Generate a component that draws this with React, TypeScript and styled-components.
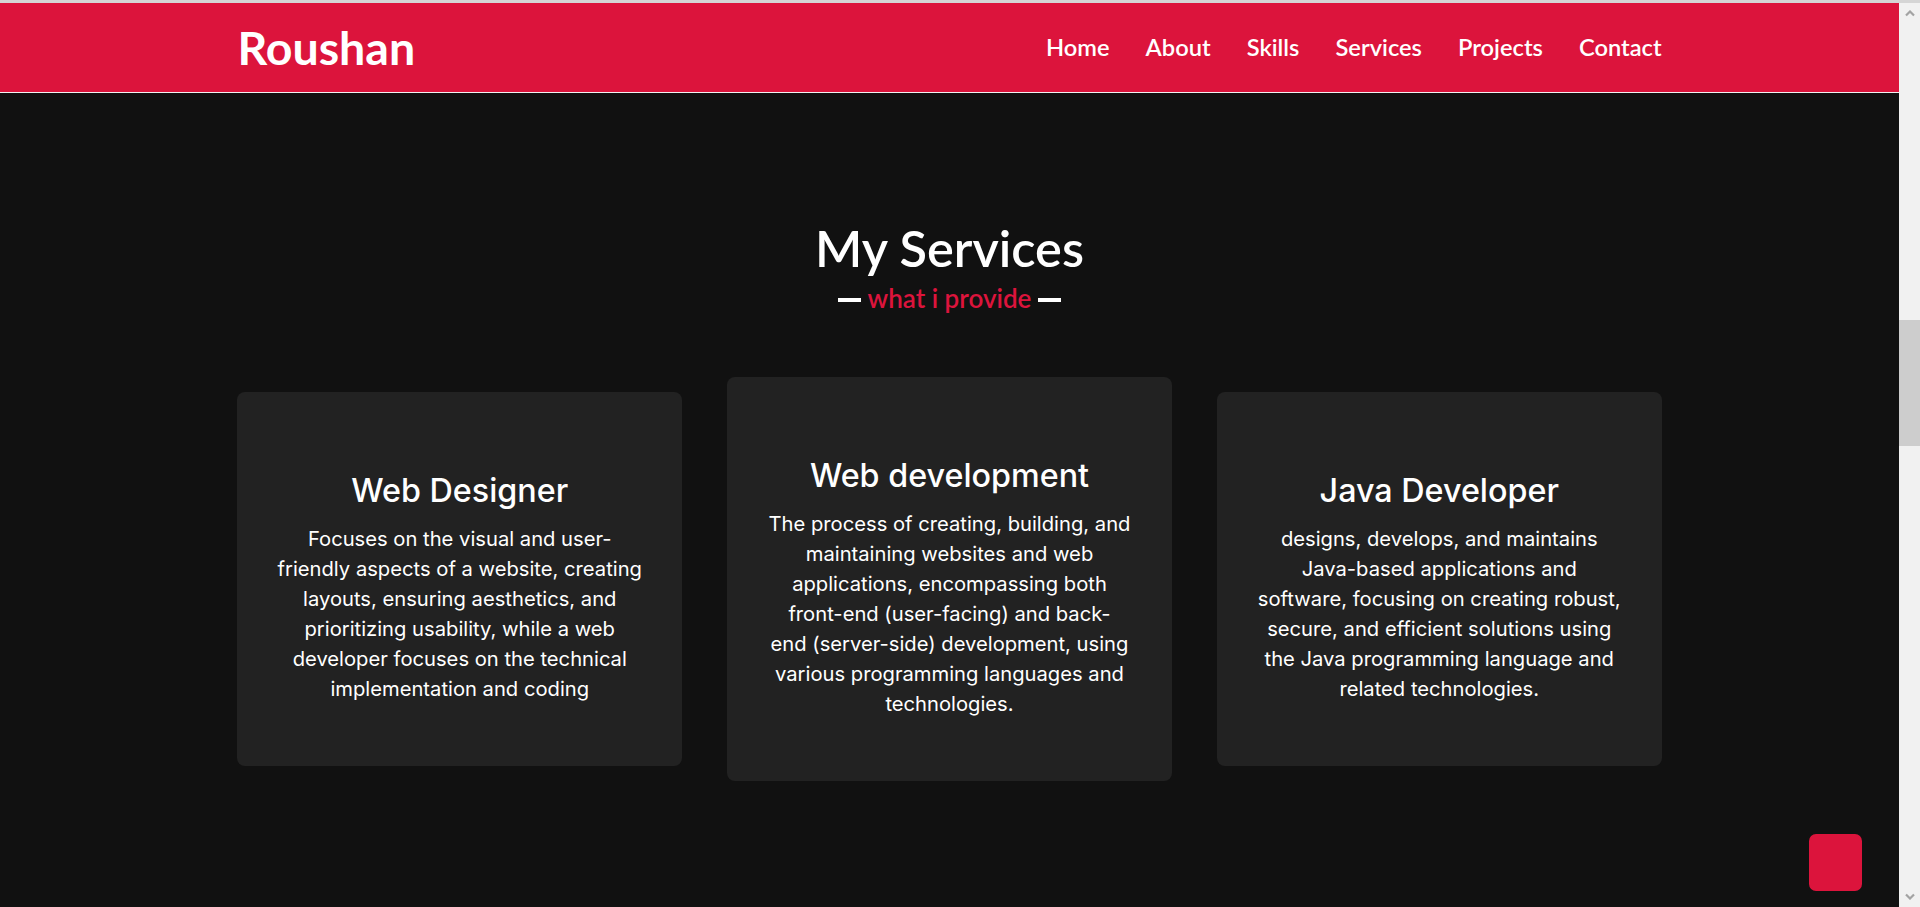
import React from "react";
import styled, { createGlobalStyle } from "styled-components";

const CRIMSON = "#dc143c";

const GlobalStyle = createGlobalStyle`
  * { box-sizing: border-box; }
  html, body {
    margin: 0;
    padding: 0;
    height: 100%;
    overflow: hidden;
    background: #111111;
  }
  body {
    font-family: "Lato", "Open Sans", sans-serif;
    color: #ffffff;
  }
`;

const Shell = styled.div`
  display: flex;
  flex-direction: column;
  height: 100vh;
`;

const WindowEdge = styled.div`
  height: 3px;
  flex-shrink: 0;
  background: #d5d5d5;
`;

const Viewport = styled.div`
  flex: 1;
  min-height: 0;
  display: flex;
`;

const Page = styled.main`
  flex: 1;
  min-width: 0;
  display: flex;
  flex-direction: column;
  background: #111111;
`;

const Header = styled.header`
  height: 90px;
  flex-shrink: 0;
  display: flex;
  justify-content: center;
  align-items: center;
  background: ${CRIMSON};
  border-bottom: 1px solid #f2f2f2;
`;

const HeaderInner = styled.div`
  width: 75%;
  display: flex;
  justify-content: space-between;
  align-items: center;
`;

const Logo = styled.a`
  font-family: "Lato", "Open Sans", sans-serif;
  font-size: 46.5px;
  font-weight: 700;
  line-height: 1;
  color: #ffffff;
  text-decoration: none;
`;

const Nav = styled.nav`
  display: flex;
  align-items: center;
  gap: 36px;
`;

const NavLink = styled.a`
  font-family: "Lato", "Open Sans", sans-serif;
  font-size: 23.7px;
  font-weight: 600;
  line-height: 1;
  color: #ffffff;
  text-decoration: none;
`;

const Section = styled.section`
  display: flex;
  flex-direction: column;
  align-items: center;
  padding-top: 125px;
`;

const Heading = styled.h2`
  margin: 0;
  font-family: "Lato", "Open Sans", sans-serif;
  font-size: 50.5px;
  font-weight: 600;
  line-height: 60px;
  color: #ffffff;
`;

const Subtitle = styled.div`
  margin-top: 5px;
  display: flex;
  align-items: center;
  gap: 7px;
  font-family: "Lato", "Open Sans", sans-serif;
  font-size: 26px;
  font-weight: 600;
  line-height: 30px;
  color: ${CRIMSON};

  &::before,
  &::after {
    content: "";
    width: 23px;
    height: 4px;
    margin-top: 4px;
    background: #ffffff;
  }
`;

const CardGrid = styled.div`
  width: 75%;
  margin-top: 64px;
  display: grid;
  grid-template-columns: repeat(3, 1fr);
  gap: 45px;
  align-items: center;
`;

const Card = styled.article`
  padding: 80px 30px 62px;
  border-radius: 8px;
  background: #222222;
  text-align: center;
`;

const CardTitle = styled.h3`
  margin: 0 0 14px;
  font-family: "Inter", "Open Sans", sans-serif;
  font-size: 32.3px;
  font-weight: 500;
  line-height: 38px;
  color: #ffffff;
`;

const CardText = styled.p`
  margin: 0;
  font-family: "Inter", "Open Sans", sans-serif;
  font-size: 20.2px;
  font-weight: 400;
  line-height: 30px;
  color: #ffffff;
  white-space: pre;
`;

const Scrollbar = styled.div`
  width: 21px;
  flex-shrink: 0;
  display: flex;
  flex-direction: column;
  background: #f1f1f1;
`;

const ScrollArrow = styled.div`
  height: 21px;
  display: flex;
  align-items: center;
  justify-content: center;
  color: #a3a3a3;
`;

const ScrollThumb = styled.div<{ $offset: number; $size: number }>`
  margin-top: ${(p) => p.$offset}px;
  height: ${(p) => p.$size}px;
  background: #cdcdcd;
`;

const ScrollTrack = styled.div`
  flex: 1;
`;

const BackToTop = styled.button`
  position: fixed;
  right: 58px;
  bottom: 16px;
  width: 53px;
  height: 57px;
  border: none;
  border-radius: 7px;
  background: ${CRIMSON};
  cursor: pointer;
`;

const Chevron = ({ down }: { down?: boolean }) => (
  <svg width="10" height="7" viewBox="0 0 10 7" aria-hidden="true">
    <path
      d={down ? "M1 1.5 L5 5.5 L9 1.5" : "M1 5.5 L5 1.5 L9 5.5"}
      fill="none"
      stroke="currentColor"
      strokeWidth="2.2"
      strokeLinejoin="miter"
    />
  </svg>
);

const navItems = ["Home", "About", "Skills", "Services", "Projects", "Contact"];

const services = [
  {
    title: "Web Designer",
    text:
      "Focuses on the visual and user-\nfriendly aspects of a website, creating\nlayouts, ensuring aesthetics, and\nprioritizing usability, while a web\ndeveloper focuses on the technical\nimplementation and coding",
  },
  {
    title: "Web development",
    text:
      "The process of creating, building, and\nmaintaining websites and web\napplications, encompassing both\nfront-end (user-facing) and back-\nend (server-side) development, using\nvarious programming languages and\ntechnologies.",
  },
  {
    title: "Java Developer",
    text:
      "designs, develops, and maintains\nJava-based applications and\nsoftware, focusing on creating robust,\nsecure, and efficient solutions using\nthe Java programming language and\nrelated technologies.",
  },
];

export default function App() {
  return (
    <>
      <GlobalStyle />
      <Shell>
        <WindowEdge />
        <Viewport>
          <Page>
            <Header>
              <HeaderInner>
                <Logo href="#">Roushan</Logo>
                <Nav>
                  {navItems.map((item) => (
                    <NavLink key={item} href="#">
                      {item}
                    </NavLink>
                  ))}
                </Nav>
              </HeaderInner>
            </Header>
            <Section>
              <Heading>My Services</Heading>
              <Subtitle>what i provide</Subtitle>
              <CardGrid>
                {services.map((s) => (
                  <Card key={s.title}>
                    <CardTitle>{s.title}</CardTitle>
                    <CardText>{s.text}</CardText>
                  </Card>
                ))}
              </CardGrid>
            </Section>
          </Page>
          <Scrollbar>
            <ScrollArrow>
              <Chevron />
            </ScrollArrow>
            <ScrollThumb $offset={296} $size={126} />
            <ScrollTrack />
            <ScrollArrow>
              <Chevron down />
            </ScrollArrow>
          </Scrollbar>
        </Viewport>
      </Shell>
      <BackToTop aria-label="Back to top" />
    </>
  );
}
